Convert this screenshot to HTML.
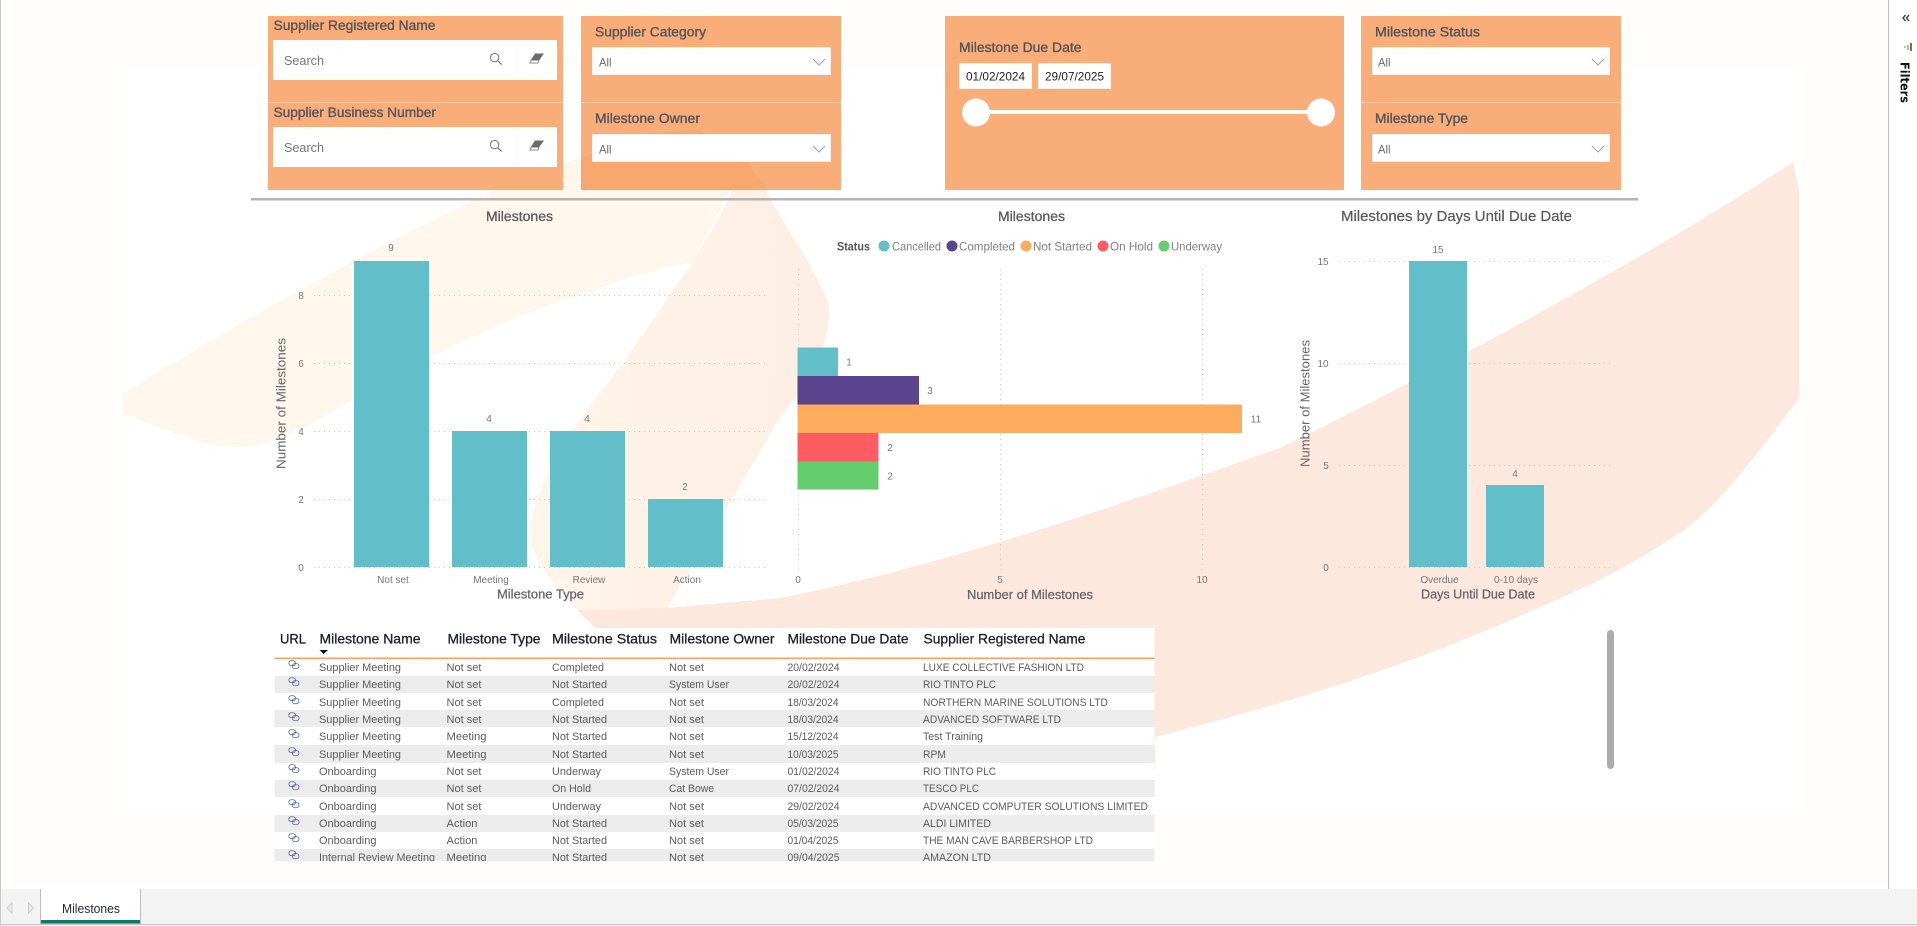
<!DOCTYPE html>
<html lang="en"><head><meta charset="utf-8"><title>Milestones</title>
<style>
html,body{margin:0;padding:0;width:1917px;height:926px;overflow:hidden;background:#fffefc}
svg{display:block;position:absolute;left:0;top:0}
text{font-family:"Liberation Sans",sans-serif;white-space:pre}
.pt{font-size:13.5px;fill:#55555c;stroke:#55555c;stroke-width:.35}
.ct{font-size:13.5px;fill:#5a5a60;stroke:#5a5a60;stroke-width:.3}
.at{font-size:12.5px;fill:#66666a}
.ab{font-size:12.5px;fill:#66666a;stroke:#66666a;stroke-width:.25}
.tk{font-size:10px;fill:#77777a;text-anchor:middle}
.lg{font-size:12px;fill:#808084}
.th{font-size:13.5px;fill:#1c1f2e;stroke:#1c1f2e;stroke-width:.3}
.td{font-size:11px;fill:#5c5c5c}
.g{stroke:#c9c9c9;stroke-width:1;stroke-dasharray:1 4;fill:none}
</style></head>
<body>
<svg width="1917" height="926" viewBox="0 0 1917 926" xmlns="http://www.w3.org/2000/svg">
<defs>
<linearGradient id="sw" x1="530" x2="830" y1="0" y2="0" gradientUnits="userSpaceOnUse"><stop offset="0" stop-color="#fff5e8"/><stop offset="1" stop-color="#fdeee3"/></linearGradient>
<clipPath id="tc"><rect x="270" y="620" width="890" height="241"/></clipPath>
<symbol id="lk" viewBox="0 0 13 11"><g fill="none" stroke="#4a5ea8" stroke-width=".85"><rect x="0.8" y="0.8" width="7.4" height="5.4" rx="2.7"/><rect x="4.6" y="4" width="7.4" height="5.6" rx="2.8"/></g></symbol>
<symbol id="mg" viewBox="0 0 14 14"><circle cx="5.6" cy="5.6" r="4.2" fill="none" stroke="#777" stroke-width="1"/><path d="M8.6 8.6L12.6 12.6" stroke="#777" stroke-width="1.2"/></symbol>
<symbol id="er" viewBox="0 0 16 12"><path d="M6 1H15L10 8H1.500Z" fill="#6a6a6a"/><path d="M1.500 8L0.800 10.500H9L10 8" fill="#fff" stroke="#6a6a6a" stroke-width=".8"/></symbol>
</defs>

<rect x="123" y="70" width="1676" height="742" fill="#fff"/>
<!-- background swooshes -->
<path fill="#fff7ec" d="M123 394C200 345 340 265 473 200C520 180 560 165 640 135L746 159L693 262C650 270 620 280 593 290C530 310 480 332 430 357C400 372 390 378 353 400C320 420 290 435 260 445C240 449 215 448 190 438C165 430 145 422 123 412Z"/>
<path fill="#fde8de" d="M577 610L667 608L780 598C947 565 1113 507 1280 448C1480 350 1680 237 1793 162L1799 190V398C1760 450 1720 505 1680 533C1620 572 1580 590 1533 610C1400 670 1280 705 1155 737V770H640L595 628Z"/>
<path fill="url(#sw)" d="M746 159L807 260C820 285 829 300 829 310C829 350 810 380 780 417L727 507L667 608L577 610C545 575 525 545 530 527C535 495 560 450 570 433L623 363L693 262C715 225 735 190 746 159Z"/>

<!-- slicer panels -->
<rect x="268" y="16" width="295" height="174" fill="#f9ad79"/>
<rect x="581" y="16" width="260" height="174" fill="#f9ad79"/>
<path d="M581 158L640 135L700 130L746 159L766 190H581Z" fill="#f8a76f"/>
<rect x="945" y="16" width="399" height="174" fill="#f9ad79"/>
<rect x="1361" y="16" width="260" height="174" fill="#f9ad79"/>
<path d="M268 102.500H563M581 102.500H841M1361 102.500H1621" stroke="#fbc6a2" stroke-width="1"/>

<text class="pt" x="273.500" y="30" textLength="162" lengthAdjust="spacingAndGlyphs">Supplier Registered Name</text>
<rect x="273" y="40" width="284" height="40" fill="#fff"/>
<text x="284" y="65" font-size="13" fill="#77777a" textLength="40" lengthAdjust="spacingAndGlyphs">Search</text>
<use href="#mg" x="489" y="52" width="14" height="14"/>
<path d="M517 40V80" stroke="#f8f8f8"/>
<use href="#er" x="529" y="52" width="16" height="13"/>
<text class="pt" x="273.500" y="117" textLength="162.500" lengthAdjust="spacingAndGlyphs">Supplier Business Number</text>
<rect x="273" y="127" width="284" height="40" fill="#fff"/>
<text x="284" y="152" font-size="13" fill="#77777a" textLength="40" lengthAdjust="spacingAndGlyphs">Search</text>
<use href="#mg" x="489" y="139" width="14" height="14"/>
<path d="M517 127V167" stroke="#f8f8f8"/>
<use href="#er" x="529" y="139" width="16" height="13"/>

<text class="pt" x="595" y="36.500" textLength="111" lengthAdjust="spacingAndGlyphs">Supplier Category</text>
<rect x="592.500" y="47.500" width="238" height="27" fill="#fff" stroke="#f1f1f1"/>
<text x="599" y="66.500" font-size="12" fill="#6b6b6b" textLength="12.500" lengthAdjust="spacingAndGlyphs">All</text>
<path d="M813 59L819 65L825 59" fill="none" stroke="#a0a0a0"/>
<text class="pt" x="595" y="123" textLength="105" lengthAdjust="spacingAndGlyphs">Milestone Owner</text>
<rect x="592.500" y="134.500" width="238" height="27" fill="#fff" stroke="#f1f1f1"/>
<text x="599" y="153.500" font-size="12" fill="#6b6b6b" textLength="12.500" lengthAdjust="spacingAndGlyphs">All</text>
<path d="M813 146L819 152L825 146" fill="none" stroke="#a0a0a0"/>

<text class="pt" x="959" y="52" textLength="122.500" lengthAdjust="spacingAndGlyphs">Milestone Due Date</text>
<rect x="959.500" y="63.500" width="72" height="25" fill="#fff" stroke="#f7f0ea"/>
<rect x="1038.500" y="63.500" width="72" height="25" fill="#fff" stroke="#f7f0ea"/>
<text x="966" y="80.500" font-size="12" fill="#222" textLength="59" lengthAdjust="spacingAndGlyphs">01/02/2024</text>
<text x="1045" y="80.500" font-size="12" fill="#222" textLength="59" lengthAdjust="spacingAndGlyphs">29/07/2025</text>
<rect x="976" y="110" width="345" height="4" fill="#fff"/>
<circle cx="976" cy="112.500" r="14" fill="#fff"/>
<circle cx="1321" cy="112.500" r="14" fill="#fff"/>

<text class="pt" x="1375" y="36.500" textLength="105" lengthAdjust="spacingAndGlyphs">Milestone Status</text>
<rect x="1372.500" y="47.500" width="237" height="27" fill="#fff" stroke="#f1f1f1"/>
<text x="1378" y="66.500" font-size="12" fill="#6b6b6b" textLength="12.500" lengthAdjust="spacingAndGlyphs">All</text>
<path d="M1592 59L1598 65L1604 59" fill="none" stroke="#a0a0a0"/>
<text class="pt" x="1375" y="123" textLength="93" lengthAdjust="spacingAndGlyphs">Milestone Type</text>
<rect x="1372.500" y="134.500" width="237" height="27" fill="#fff" stroke="#f1f1f1"/>
<text x="1378" y="153.500" font-size="12" fill="#6b6b6b" textLength="12.500" lengthAdjust="spacingAndGlyphs">All</text>
<path d="M1592 146L1598 152L1604 146" fill="none" stroke="#a0a0a0"/>

<rect x="251" y="198" width="1387" height="2.500" fill="#b4b4b4"/>

<!-- chart 1 -->
<text class="ct" x="486" y="221" textLength="67" lengthAdjust="spacingAndGlyphs">Milestones</text>
<path class="g" d="M314 295.500H765M314 363.500H765M314 431.500H765M314 499.500H765M314 567.500H765"/>
<g fill="#62bfca"><rect x="354" y="261" width="75" height="306"/><rect x="452" y="431" width="75" height="136"/><rect x="550" y="431" width="75" height="136"/><rect x="648" y="499" width="75" height="68"/></g>
<text class="tk" x="391" y="251">9</text><text class="tk" x="489" y="422">4</text><text class="tk" x="587" y="422">4</text><text class="tk" x="685" y="490">2</text>
<text class="tk" x="301" y="299">8</text><text class="tk" x="301" y="367">6</text><text class="tk" x="301" y="435">4</text><text class="tk" x="301" y="503">2</text><text class="tk" x="301" y="571">0</text>
<text class="tk" x="393" y="583">Not set</text><text class="tk" x="491" y="583">Meeting</text><text class="tk" x="589" y="583">Review</text><text class="tk" x="687" y="583">Action</text>
<text class="at" transform="translate(285.500 469) rotate(-90)" textLength="131" lengthAdjust="spacingAndGlyphs">Number of Milestones</text>
<text class="ab" x="497" y="598.500" textLength="87" lengthAdjust="spacingAndGlyphs">Milestone Type</text>

<!-- chart 2 -->
<text class="ct" x="998" y="221" textLength="67" lengthAdjust="spacingAndGlyphs">Milestones</text>
<text x="837" y="250.500" font-size="12" font-weight="bold" fill="#555" textLength="33" lengthAdjust="spacingAndGlyphs">Status</text>
<circle cx="884" cy="246" r="5.500" fill="#62bfca"/><text class="lg" x="892" y="250.500" textLength="49" lengthAdjust="spacingAndGlyphs">Cancelled</text>
<circle cx="952" cy="246" r="5.500" fill="#5a448d"/><text class="lg" x="959" y="250.500" textLength="56" lengthAdjust="spacingAndGlyphs">Completed</text>
<circle cx="1026" cy="246" r="5.500" fill="#fdab5c"/><text class="lg" x="1033" y="250.500" textLength="59" lengthAdjust="spacingAndGlyphs">Not Started</text>
<circle cx="1103" cy="246" r="5.500" fill="#fd5c63"/><text class="lg" x="1110" y="250.500" textLength="43" lengthAdjust="spacingAndGlyphs">On Hold</text>
<circle cx="1164" cy="246" r="5.500" fill="#64cd6e"/><text class="lg" x="1171" y="250.500" textLength="51" lengthAdjust="spacingAndGlyphs">Underway</text>
<path class="g" d="M798.500 269V570M1000.500 269V570M1202.500 269V570"/>
<rect x="797.500" y="347.500" width="40.500" height="28.500" fill="#62bfca"/>
<rect x="797.500" y="376" width="121.500" height="28.500" fill="#5a448d"/>
<rect x="797.500" y="404.500" width="444.500" height="28.500" fill="#fdab5c"/>
<rect x="797.500" y="433" width="81" height="28.500" fill="#fd5c63"/>
<rect x="797.500" y="461.500" width="81" height="28" fill="#64cd6e"/>
<text class="tk" x="849" y="365.500">1</text><text class="tk" x="930" y="394">3</text><text class="tk" x="1256" y="422.500">11</text><text class="tk" x="890" y="451">2</text><text class="tk" x="890" y="479.500">2</text>
<text class="tk" x="798" y="583">0</text><text class="tk" x="1000" y="583">5</text><text class="tk" x="1202" y="583">10</text>
<text class="ab" x="967" y="599" textLength="126" lengthAdjust="spacingAndGlyphs">Number of Milestones</text>

<!-- chart 3 -->
<text x="1341" y="221" font-size="14.500" fill="#5a5a60" stroke="#5a5a60" stroke-width=".25" textLength="231" lengthAdjust="spacingAndGlyphs">Milestones by Days Until Due Date</text>
<path class="g" d="M1339 261.500H1612M1339 363.500H1612M1339 465.500H1612M1339 567.500H1612"/>
<rect x="1409" y="261" width="58" height="306" fill="#62bfca"/>
<rect x="1486" y="485" width="58" height="82" fill="#62bfca"/>
<text class="tk" x="1438" y="253">15</text><text class="tk" x="1515" y="477">4</text>
<text class="tk" x="1323" y="265">15</text><text class="tk" x="1323" y="367">10</text><text class="tk" x="1326" y="469">5</text><text class="tk" x="1326" y="571">0</text>
<text class="tk" x="1439.500" y="583">Overdue</text><text class="tk" x="1516" y="583">0-10 days</text>
<text class="at" transform="translate(1309.500 467) rotate(-90)" textLength="127" lengthAdjust="spacingAndGlyphs">Number of Milestones</text>
<text class="ab" x="1421" y="598.500" textLength="114" lengthAdjust="spacingAndGlyphs">Days Until Due Date</text>

<!-- table -->
<rect x="274.500" y="628" width="880" height="233" fill="#fff"/>
<g fill="#ececec"><rect x="274.500" y="676" width="880" height="17"/><rect x="274.500" y="710" width="880" height="17"/><rect x="274.500" y="745" width="880" height="18"/><rect x="274.500" y="780" width="880" height="17"/><rect x="274.500" y="815" width="880" height="17"/><rect x="274.500" y="849" width="880" height="12"/></g>
<rect x="274.500" y="657.500" width="880" height="1.600" fill="#f7a25f"/>
<text class="th" x="280" y="643.500" textLength="26" lengthAdjust="spacingAndGlyphs">URL</text>
<text class="th" x="319.500" y="643.500" textLength="101" lengthAdjust="spacingAndGlyphs">Milestone Name</text>
<text class="th" x="447.500" y="643.500" textLength="93" lengthAdjust="spacingAndGlyphs">Milestone Type</text>
<text class="th" x="552" y="643.500" textLength="105" lengthAdjust="spacingAndGlyphs">Milestone Status</text>
<text class="th" x="669.500" y="643.500" textLength="105" lengthAdjust="spacingAndGlyphs">Milestone Owner</text>
<text class="th" x="787.500" y="643.500" textLength="121" lengthAdjust="spacingAndGlyphs">Milestone Due Date</text>
<text class="th" x="923.500" y="643.500" textLength="162" lengthAdjust="spacingAndGlyphs">Supplier Registered Name</text>
<path d="M319.500 650H328L323.700 654Z" fill="#111"/>
<g clip-path="url(#tc)">
<use href="#lk" x="288" y="660" width="12" height="10"/><use href="#lk" x="288" y="677" width="12" height="10"/><use href="#lk" x="288" y="695" width="12" height="10"/><use href="#lk" x="288" y="712" width="12" height="10"/><use href="#lk" x="288" y="729" width="12" height="10"/><use href="#lk" x="288" y="747" width="12" height="10"/><use href="#lk" x="288" y="764" width="12" height="10"/><use href="#lk" x="288" y="781" width="12" height="10"/><use href="#lk" x="288" y="799" width="12" height="10"/><use href="#lk" x="288" y="816" width="12" height="10"/><use href="#lk" x="288" y="833" width="12" height="10"/><use href="#lk" x="288" y="850" width="12" height="10"/>

<text class="td" x="319" y="671" textLength="82" lengthAdjust="spacingAndGlyphs">Supplier Meeting</text><text class="td" x="446.500" y="671" textLength="35" lengthAdjust="spacingAndGlyphs">Not set</text><text class="td" x="552" y="671" textLength="52" lengthAdjust="spacingAndGlyphs">Completed</text><text class="td" x="669" y="671" textLength="35" lengthAdjust="spacingAndGlyphs">Not set</text><text class="td" x="787.500" y="671" textLength="52" lengthAdjust="spacingAndGlyphs">20/02/2024</text><text class="td" x="923" y="671" textLength="161" lengthAdjust="spacingAndGlyphs">LUXE COLLECTIVE FASHION LTD</text>

<text class="td" x="319" y="688" textLength="82" lengthAdjust="spacingAndGlyphs">Supplier Meeting</text><text class="td" x="446.500" y="688" textLength="35" lengthAdjust="spacingAndGlyphs">Not set</text><text class="td" x="552" y="688" textLength="55" lengthAdjust="spacingAndGlyphs">Not Started</text><text class="td" x="669" y="688" textLength="60" lengthAdjust="spacingAndGlyphs">System User</text><text class="td" x="787.500" y="688" textLength="52" lengthAdjust="spacingAndGlyphs">20/02/2024</text><text class="td" x="923" y="688" textLength="73" lengthAdjust="spacingAndGlyphs">RIO TINTO PLC</text>

<text class="td" x="319" y="706" textLength="82" lengthAdjust="spacingAndGlyphs">Supplier Meeting</text><text class="td" x="446.500" y="706" textLength="35" lengthAdjust="spacingAndGlyphs">Not set</text><text class="td" x="552" y="706" textLength="52" lengthAdjust="spacingAndGlyphs">Completed</text><text class="td" x="669" y="706" textLength="35" lengthAdjust="spacingAndGlyphs">Not set</text><text class="td" x="787.500" y="706" textLength="51" lengthAdjust="spacingAndGlyphs">18/03/2024</text><text class="td" x="923" y="706" textLength="185" lengthAdjust="spacingAndGlyphs">NORTHERN MARINE SOLUTIONS LTD</text>

<text class="td" x="319" y="723" textLength="82" lengthAdjust="spacingAndGlyphs">Supplier Meeting</text><text class="td" x="446.500" y="723" textLength="35" lengthAdjust="spacingAndGlyphs">Not set</text><text class="td" x="552" y="723" textLength="55" lengthAdjust="spacingAndGlyphs">Not Started</text><text class="td" x="669" y="723" textLength="35" lengthAdjust="spacingAndGlyphs">Not set</text><text class="td" x="787.500" y="723" textLength="51" lengthAdjust="spacingAndGlyphs">18/03/2024</text><text class="td" x="923" y="723" textLength="138" lengthAdjust="spacingAndGlyphs">ADVANCED SOFTWARE LTD</text>

<text class="td" x="319" y="740" textLength="82" lengthAdjust="spacingAndGlyphs">Supplier Meeting</text><text class="td" x="446.500" y="740" textLength="40" lengthAdjust="spacingAndGlyphs">Meeting</text><text class="td" x="552" y="740" textLength="55" lengthAdjust="spacingAndGlyphs">Not Started</text><text class="td" x="669" y="740" textLength="35" lengthAdjust="spacingAndGlyphs">Not set</text><text class="td" x="787.500" y="740" textLength="51" lengthAdjust="spacingAndGlyphs">15/12/2024</text><text class="td" x="923" y="740" textLength="60" lengthAdjust="spacingAndGlyphs">Test Training</text>

<text class="td" x="319" y="758" textLength="82" lengthAdjust="spacingAndGlyphs">Supplier Meeting</text><text class="td" x="446.500" y="758" textLength="40" lengthAdjust="spacingAndGlyphs">Meeting</text><text class="td" x="552" y="758" textLength="55" lengthAdjust="spacingAndGlyphs">Not Started</text><text class="td" x="669" y="758" textLength="35" lengthAdjust="spacingAndGlyphs">Not set</text><text class="td" x="787.500" y="758" textLength="51" lengthAdjust="spacingAndGlyphs">10/03/2025</text><text class="td" x="923" y="758" textLength="23" lengthAdjust="spacingAndGlyphs">RPM</text>

<text class="td" x="319" y="775" textLength="57.500" lengthAdjust="spacingAndGlyphs">Onboarding</text><text class="td" x="446.500" y="775" textLength="35" lengthAdjust="spacingAndGlyphs">Not set</text><text class="td" x="552" y="775" textLength="49" lengthAdjust="spacingAndGlyphs">Underway</text><text class="td" x="669" y="775" textLength="60" lengthAdjust="spacingAndGlyphs">System User</text><text class="td" x="787.500" y="775" textLength="52" lengthAdjust="spacingAndGlyphs">01/02/2024</text><text class="td" x="923" y="775" textLength="73" lengthAdjust="spacingAndGlyphs">RIO TINTO PLC</text>

<text class="td" x="319" y="792" textLength="57.500" lengthAdjust="spacingAndGlyphs">Onboarding</text><text class="td" x="446.500" y="792" textLength="35" lengthAdjust="spacingAndGlyphs">Not set</text><text class="td" x="552" y="792" textLength="39" lengthAdjust="spacingAndGlyphs">On Hold</text><text class="td" x="669" y="792" textLength="45" lengthAdjust="spacingAndGlyphs">Cat Bowe</text><text class="td" x="787.500" y="792" textLength="52" lengthAdjust="spacingAndGlyphs">07/02/2024</text><text class="td" x="923" y="792" textLength="56" lengthAdjust="spacingAndGlyphs">TESCO PLC</text>

<text class="td" x="319" y="810" textLength="57.500" lengthAdjust="spacingAndGlyphs">Onboarding</text><text class="td" x="446.500" y="810" textLength="35" lengthAdjust="spacingAndGlyphs">Not set</text><text class="td" x="552" y="810" textLength="49" lengthAdjust="spacingAndGlyphs">Underway</text><text class="td" x="669" y="810" textLength="35" lengthAdjust="spacingAndGlyphs">Not set</text><text class="td" x="787.500" y="810" textLength="52" lengthAdjust="spacingAndGlyphs">29/02/2024</text><text class="td" x="923" y="810" textLength="225" lengthAdjust="spacingAndGlyphs">ADVANCED COMPUTER SOLUTIONS LIMITED</text>

<text class="td" x="319" y="827" textLength="57.500" lengthAdjust="spacingAndGlyphs">Onboarding</text><text class="td" x="446.500" y="827" textLength="31" lengthAdjust="spacingAndGlyphs">Action</text><text class="td" x="552" y="827" textLength="55" lengthAdjust="spacingAndGlyphs">Not Started</text><text class="td" x="669" y="827" textLength="35" lengthAdjust="spacingAndGlyphs">Not set</text><text class="td" x="787.500" y="827" textLength="51" lengthAdjust="spacingAndGlyphs">05/03/2025</text><text class="td" x="923" y="827" textLength="68" lengthAdjust="spacingAndGlyphs">ALDI LIMITED</text>

<text class="td" x="319" y="844" textLength="57.500" lengthAdjust="spacingAndGlyphs">Onboarding</text><text class="td" x="446.500" y="844" textLength="31" lengthAdjust="spacingAndGlyphs">Action</text><text class="td" x="552" y="844" textLength="55" lengthAdjust="spacingAndGlyphs">Not Started</text><text class="td" x="669" y="844" textLength="35" lengthAdjust="spacingAndGlyphs">Not set</text><text class="td" x="787.500" y="844" textLength="51" lengthAdjust="spacingAndGlyphs">01/04/2025</text><text class="td" x="923" y="844" textLength="170" lengthAdjust="spacingAndGlyphs">THE MAN CAVE BARBERSHOP LTD</text>

<text class="td" x="319" y="861" textLength="116" lengthAdjust="spacingAndGlyphs">Internal Review Meeting</text><text class="td" x="446.500" y="861" textLength="40" lengthAdjust="spacingAndGlyphs">Meeting</text><text class="td" x="552" y="861" textLength="55" lengthAdjust="spacingAndGlyphs">Not Started</text><text class="td" x="669" y="861" textLength="35" lengthAdjust="spacingAndGlyphs">Not set</text><text class="td" x="787.500" y="861" textLength="52" lengthAdjust="spacingAndGlyphs">09/04/2025</text><text class="td" x="923" y="861" textLength="68" lengthAdjust="spacingAndGlyphs">AMAZON LTD</text>
</g>

<!-- scrollbar -->
<rect x="1607" y="630" width="7" height="139" rx="3.500" fill="#ababab"/>

<!-- right filters pane -->
<rect x="1888" y="0" width="29" height="889" fill="#fff"/>
<path d="M1888.500 0V889" stroke="#bdbdbd"/>
<path d="M1905.500 15L1903 18L1905.500 21M1909 15L1906.500 18L1909 21" fill="none" stroke="#444" stroke-width="1.400"/>
<path d="M1905 46V48" stroke="#e0893c" stroke-width="1.400"/><path d="M1908 45V50" stroke="#d58a3c" stroke-width="1.400"/><path d="M1911 43V51" stroke="#333" stroke-width="1.400"/>
<text transform="translate(1900.500 62) rotate(90)" font-size="12.500" font-weight="bold" fill="#111" textLength="41" lengthAdjust="spacingAndGlyphs" style="font-family:'DejaVu Sans','Liberation Sans',sans-serif">Filters</text>

<!-- bottom tab bar -->
<rect x="0" y="889" width="1917" height="37" fill="#f3f3f3"/>
<rect x="0" y="924" width="1917" height="1" fill="#c4c4c4"/>
<rect x="0" y="0" width="1" height="926" fill="#c8c8c8"/>
<path d="M12 903L7 908L12 913ZM28.500 903L33.500 908L28.500 913Z" fill="#ececec" stroke="#cdcdcd"/>
<rect x="41" y="889" width="99" height="31" fill="#fff"/>
<rect x="41" y="920" width="100" height="3.600" fill="#117865"/>
<path d="M40.500 889V924M140.500 889V924" stroke="#bdbdbd"/>
<text x="62" y="913" font-size="13" fill="#252a3a" textLength="58" lengthAdjust="spacingAndGlyphs">Milestones</text>
</svg>
</body></html>
